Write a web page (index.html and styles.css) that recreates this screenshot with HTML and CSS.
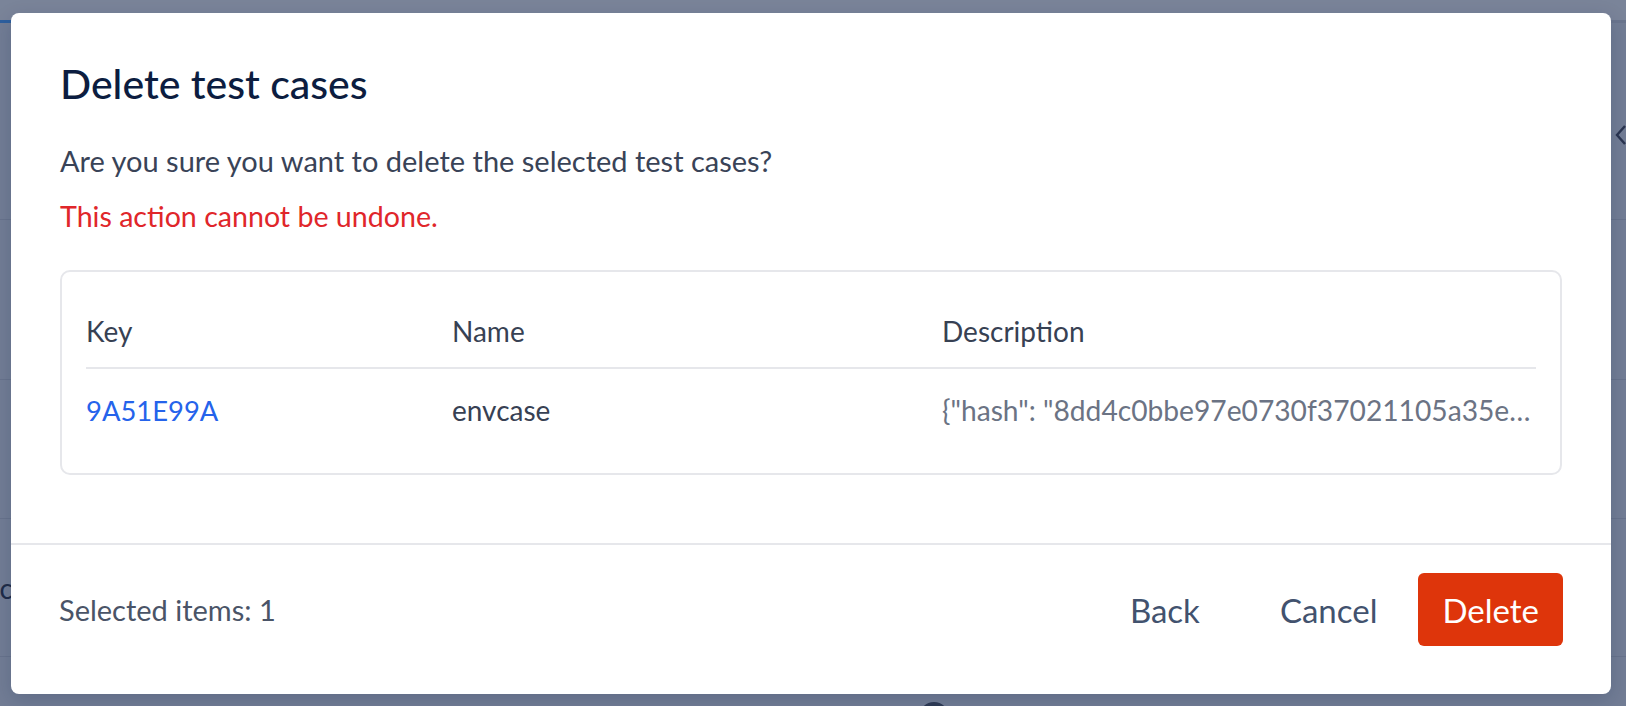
FILE: index.html
```html
<!DOCTYPE html>
<html lang="en">
<head>
<meta charset="utf-8">
<title>Delete test cases</title>
<link rel="stylesheet" href="styles.css">
</head>
<body>
<div class="page">
  <div class="page-header"></div>
  <div class="page-tabbar"><span class="tab-accent"></span></div>
  <div class="page-section s1">
    <svg class="chevron" width="14" height="22" viewBox="0 0 14 22"><polyline points="11,2 3,11 11,20" fill="none" stroke="#2a3550" stroke-width="2.4"/></svg>
  </div>
  <div class="page-section s2"></div>
  <div class="page-section s3"></div>
  <div class="page-section s4"><span class="bg-text">nc</span></div>
  <div class="page-section s5"><span class="bg-avatar"></span></div>
</div>

<div class="modal" role="dialog" aria-labelledby="dlg-title">
  <div class="modal-body">
    <h1 id="dlg-title" class="modal-title">Delete test cases</h1>
    <p class="modal-text">Are you sure you want to delete the selected test cases?</p>
    <p class="modal-warning">This action cannot be undone.</p>
    <div class="table-box">
      <div class="table">
        <div class="cell head">Key</div>
        <div class="cell head">Name</div>
        <div class="cell head">Description</div>
        <div class="cell row"><a class="key-link" href="#">9A51E99A</a></div>
        <div class="cell row">envcase</div>
        <div class="cell row desc">{"hash": "8dd4c0bbe97e0730f37021105a35e…</div>
      </div>
    </div>
  </div>
  <div class="modal-footer">
    <span class="selected-count">Selected items: 1</span>
    <div class="actions">
      <button class="btn btn-subtle btn-back">Back</button>
      <button class="btn btn-subtle">Cancel</button>
      <button class="btn btn-danger">Delete</button>
    </div>
  </div>
</div>
</body>
</html>
```
FILE: styles.css
```css
* { box-sizing: border-box; }

html, body {
  margin: 0;
  padding: 0;
}

body {
  width: 1626px;
  height: 706px;
  overflow: hidden;
  position: relative;
  background: #727d95;
  font-family: Lato, "Open Sans", sans-serif;
}

/* dimmed page underneath */
.page {
  height: 706px;
  display: flex;
  flex-direction: column;
}
.page-header {
  height: 20px;
  background: #7a8499;
  flex: none;
}
.page-tabbar {
  height: 3px;
  background: #6a758e;
  flex: none;
  display: flex;
}
.tab-accent {
  width: 11px;
  background: #2d5f9e;
}
.page-section {
  flex: none;
  border-bottom: 1px solid #68738c;
  display: flex;
  align-items: center;
}
.s1 { height: 197px; justify-content: flex-end; padding-top: 28px; }
.s2 { height: 160px; }
.s3 { height: 139px; }
.s4 { height: 138px; }
.s5 { flex: 1; border-bottom: none; align-items: flex-end; }
.chevron { margin-right: -2px; }
.bg-text {
  margin-left: -16px;
  font-size: 28px;
  color: #1f2c48;
}
.bg-avatar {
  width: 30px;
  height: 30px;
  border-radius: 50%;
  background: #2f3b55;
  margin-left: 919px;
  margin-bottom: -26px;
}

/* modal (overlay) */
.modal {
  position: absolute;
  left: 11px;
  top: 13px;
  width: 1600px;
  background: #ffffff;
  border-radius: 8px;
  box-shadow: 0 6px 20px rgba(9, 30, 66, 0.18);
}
.modal-body {
  padding: 47px 49px 68px 49px;
}
.modal-title {
  margin: 0;
  font-size: 41px;
  line-height: 48px;
  font-weight: 500;
  color: #0c1d40;
}
.modal-text {
  margin: 33px 0 0;
  font-size: 29px;
  line-height: 40px;
  color: #394357;
}
.modal-warning {
  margin: 15px 0 0;
  font-size: 28.6px;
  line-height: 40px;
  color: #e0262a;
}
.table-box {
  margin-top: 34px;
  border: 2px solid #e6e7eb;
  border-radius: 10px;
  padding: 24px;
}
.table {
  display: grid;
  grid-template-columns: 366px 490px minmax(0, 1fr);
}
.cell {
  font-size: 28px;
  line-height: 40px;
  white-space: nowrap;
  overflow: hidden;
  text-overflow: ellipsis;
}
.head {
  padding: 15px 0 16px;
  border-bottom: 2px solid #e6e7eb;
  color: #374153;
}
.row {
  padding: 21px 0 18px;
  color: #374153;
}
.key-link {
  color: #2563eb;
  text-decoration: none;
  font-size: 27.4px;
}
.desc {
  color: #6b7384;
  font-size: 28.2px;
}

.modal-footer {
  border-top: 2px solid #e6e7eb;
  padding: 28px 48px 48px 48px;
  display: flex;
  align-items: center;
  justify-content: space-between;
}
.selected-count {
  font-size: 29px;
  color: #4a5467;
}
.actions {
  display: flex;
  align-items: center;
  gap: 17px;
}
.btn {
  height: 73px;
  padding: 0 24px;
  border: none;
  border-radius: 6px;
  font-family: Lato, "Open Sans", sans-serif;
  font-size: 33px;
  cursor: pointer;
}
.btn-subtle {
  background: transparent;
  color: #42526e;
}
.btn-back { margin-right: 15px; }
.btn-danger {
  background: #de350b;
  color: #ffffff;
}
```
